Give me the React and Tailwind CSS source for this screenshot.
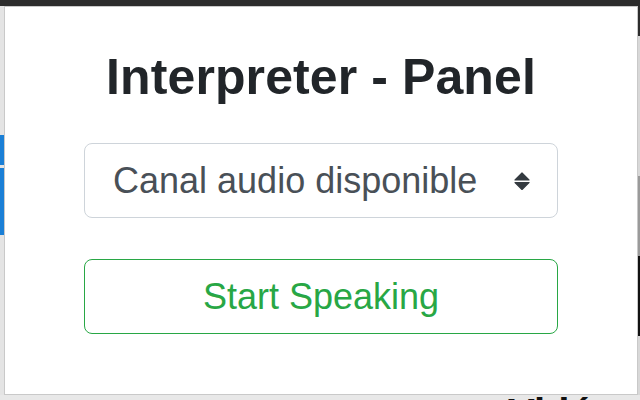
import { useState } from 'react';

function SortIcon() {
  return (
    <svg width="18" height="18" viewBox="0 0 18 18" className="pointer-events-none absolute right-[27px] top-1/2 -translate-y-1/2">
      <path d="M2 8 L9 1 L16 8 Z" fill="#343a40" stroke="#343a40" strokeWidth="1.2" strokeLinejoin="round" />
      <path d="M2 10.5 L9 17.5 L16 10.5 Z" fill="#343a40" stroke="#343a40" strokeWidth="1.2" strokeLinejoin="round" />
    </svg>
  );
}

export default function App() {
  const [channel, setChannel] = useState('');
  const [speaking, setSpeaking] = useState(false);

  return (
    <div className="w-[640px] h-[400px] overflow-hidden bg-[#dedede] flex flex-col" style={{ fontFamily: '"Liberation Sans", Arial, sans-serif' }}>
      <div className="h-[6px] bg-[#2c2c2c] shrink-0" />
      <div className="flex flex-1 min-h-0">
        {/* left edge of the page behind */}
        <div className="w-[4px] bg-[#e4e4e4] flex flex-col">
          <div className="h-[129px]" />
          <div className="h-[30px] bg-[#1a7fd6]" />
          <div className="h-[3px]" />
          <div className="h-[67px] bg-[#1a7fd6]" />
        </div>

        <div className="flex-1 bg-white border border-[#c9c9c9] flex flex-col items-center pt-[45px]">
          <h1 className="text-[50px] leading-[50px] font-bold text-[#212529] tracking-[0.1px]">Interpreter - Panel</h1>

          <div className="relative mt-[41px] w-[474px]">
            <select
              value={channel}
              onChange={(e) => setChannel(e.target.value)}
              className="appearance-none w-full h-[75px] pl-[28px] pr-[60px] bg-white border border-[#ced4da] rounded-[8px] text-[36px] text-[#495057] outline-none"
              style={{ fontFamily: '"Liberation Sans", Arial, sans-serif' }}
            >
              <option value="">Canal audio disponible</option>
            </select>
            <SortIcon />
          </div>

          <button
            type="button"
            onClick={() => setSpeaking((s) => !s)}
            className="mt-[41px] w-[474px] h-[75px] border-[1.5px] border-[#28a745] rounded-[8px] text-[36px] text-[#28a745] bg-white"
          >
            {speaking ? 'Stop Speaking' : 'Start Speaking'}
          </button>
        </div>

        <div className="w-[2px] bg-[#d8d8d8] flex flex-col">
          <div className="h-[30px] bg-[#2c2c2c]" />
          <div className="h-[140px]" />
          <div className="h-[80px] bg-[#9a9a9a]" />
          <div className="h-[80px] bg-[#111]" />
        </div>
      </div>
      {/* bottom strip: page text peeking under the popup */}
      <div className="h-[5px] shrink-0 bg-[#e8e8e8] overflow-hidden relative">
        <span className="absolute left-[508px] top-0 text-[40px] leading-[36px] font-bold text-[#111] whitespace-nowrap">Vidéo</span>
      </div>
    </div>
  );
}
